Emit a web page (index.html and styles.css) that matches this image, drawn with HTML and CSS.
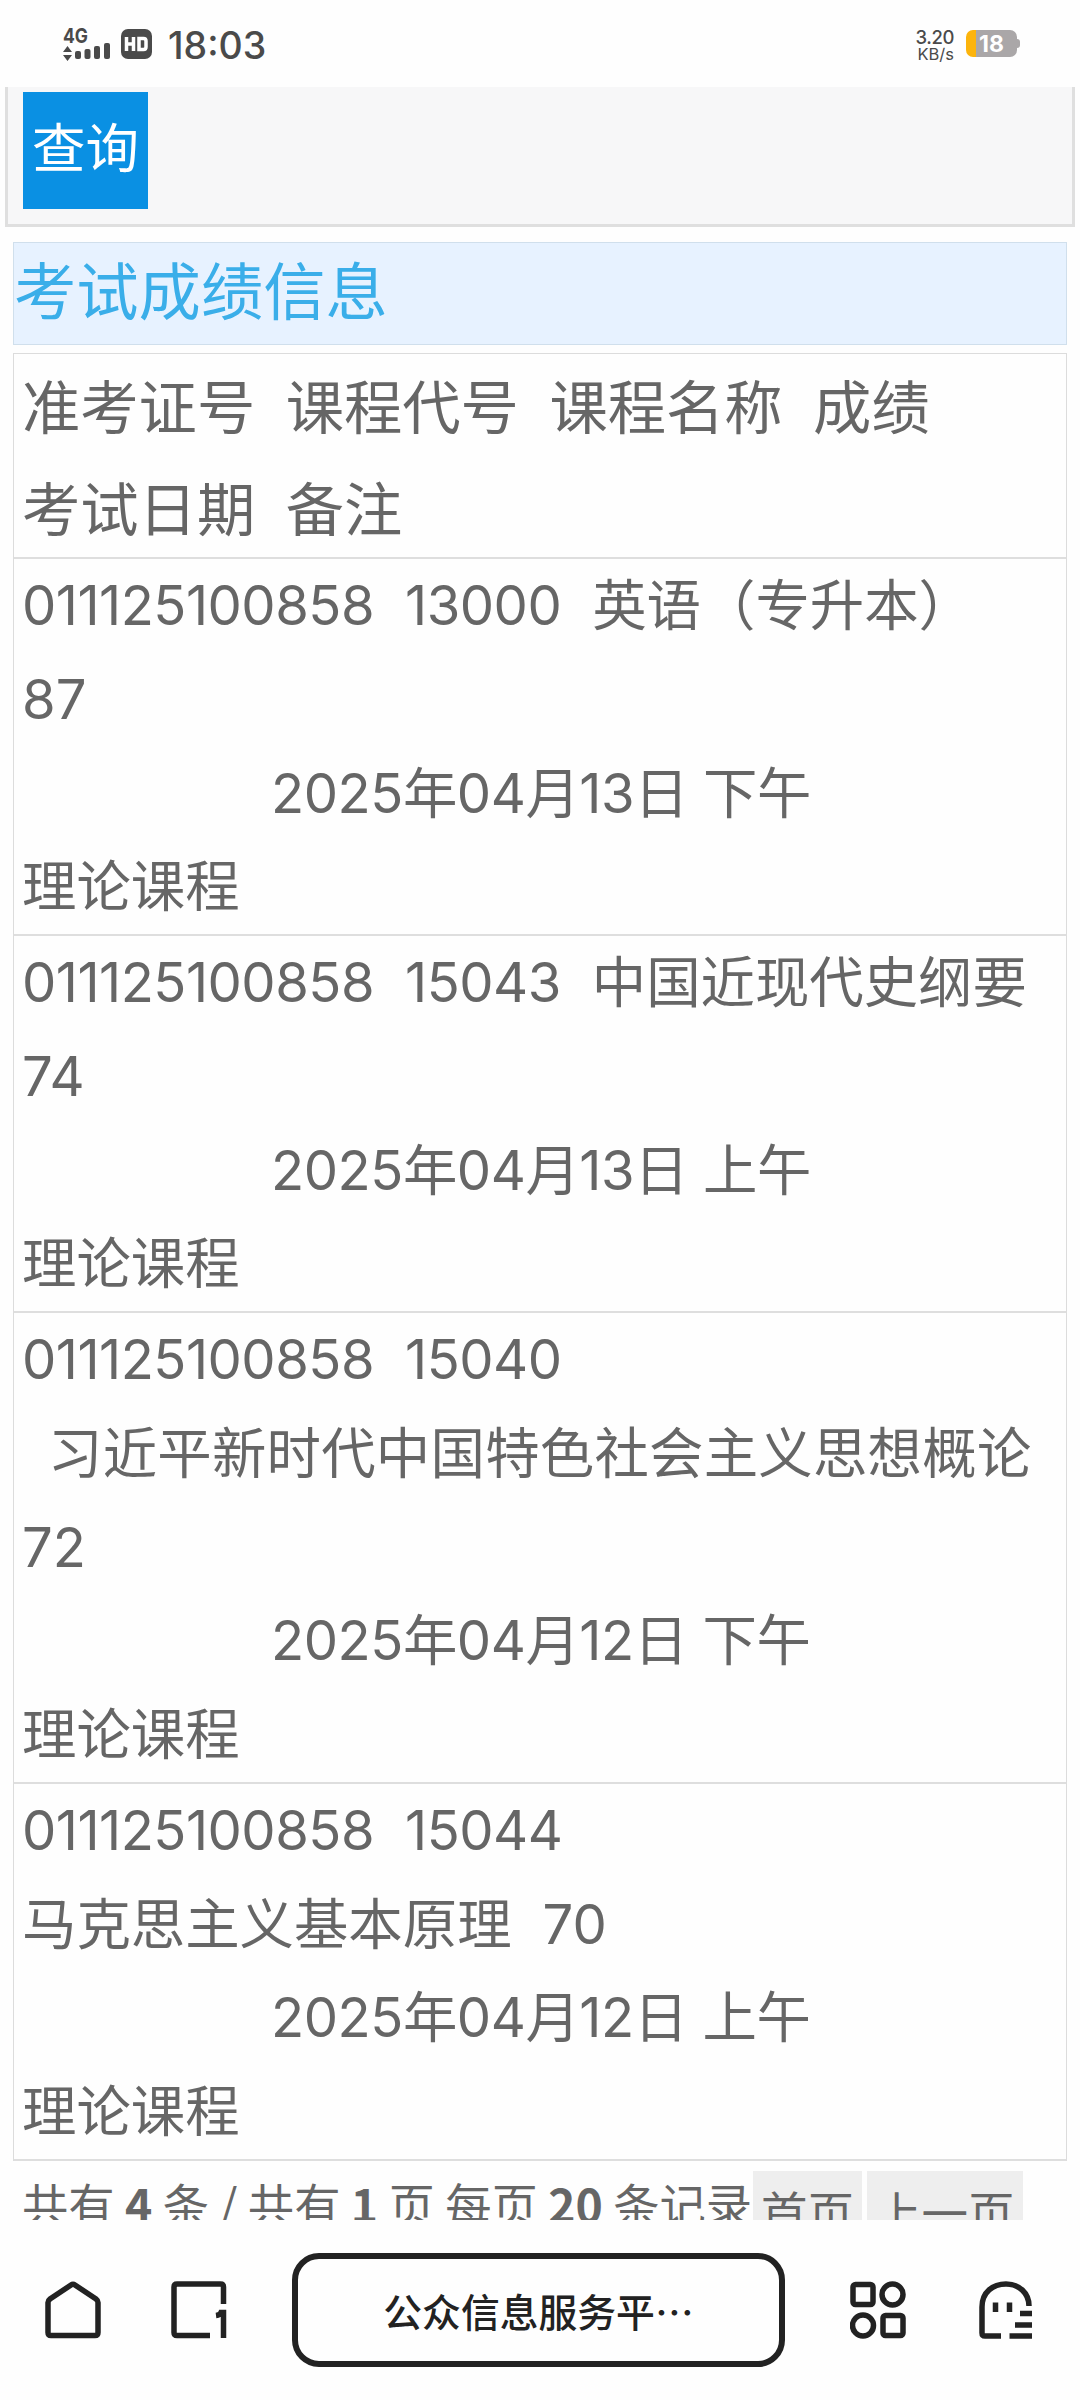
FILE: index.html
```
<!DOCTYPE html>
<html lang="zh-CN">
<head>
    <meta charset="UTF-8">
    <meta name="viewport" content="width=device-width, initial-scale=1.0">
    <title>公众信息服务平台</title>
    <link rel="stylesheet" href="styles.css">
</head>
<body>
    <div class="status-bar">
        <svg class="signal" width="48" height="34" viewBox="0 0 48 34">
            <text class="net" x="0" y="16" textLength="25" lengthAdjust="spacingAndGlyphs">4G</text>
            <path d="M0 25l4.500-6 4.500 6zM0 28h9l-4.500 6z"/>
            <rect x="12" y="24" width="6" height="8" rx="2"/>
            <rect x="21.500" y="22" width="6" height="10" rx="2"/>
            <rect x="31" y="19" width="6" height="13" rx="2"/>
            <rect x="41" y="16" width="6" height="16" rx="2"/>
        </svg>
        <svg class="hd" width="31" height="30" viewBox="0 0 31 30">
            <rect width="31" height="30" rx="7"/>
            <path d="M5.500 8v14M12.500 8v14M5.500 15h7M18 9.500h4.500q2.500 0 2.500 2.500v6q0 2.500-2.500 2.500H18z"/>
        </svg>
        <span class="time">18:03</span>
        <div class="speed">
            <span class="speed-num">3.20</span>
            <span class="speed-unit">KB/s</span>
        </div>
        <div class="battery"><span>18</span></div>
    </div>

    <div class="page">
        <div class="search-panel">
            <button class="search-btn">查询</button>
        </div>
        <h1 class="title">考试成绩信息</h1>
        <div class="scores">
            <div class="row head">
                <p class="line"><span>准考证号</span><span>课程代号</span><span>课程名称</span><span>成绩</span></p>
                <p class="line"><span>考试日期</span><span>备注</span></p>
            </div>
            <div class="row">
                <p class="line"><span class="num">011125100858</span><span class="num">13000</span><span>英语（专升本）</span></p>
                <p class="line">87</p>
                <p class="line date">2025年04月13日 下午</p>
                <p class="line">理论课程</p>
            </div>
            <div class="row">
                <p class="line"><span class="num">011125100858</span><span class="num">15043</span><span>中国近现代史纲要</span></p>
                <p class="line">74</p>
                <p class="line date">2025年04月13日 上午</p>
                <p class="line">理论课程</p>
            </div>
            <div class="row">
                <p class="line"><span class="num">011125100858</span><span class="num">15040</span></p>
                <p class="line indent">习近平新时代中国特色社会主义思想概论</p>
                <p class="line">72</p>
                <p class="line date">2025年04月12日 下午</p>
                <p class="line">理论课程</p>
            </div>
            <div class="row">
                <p class="line"><span class="num">011125100858</span><span class="num">15044</span></p>
                <p class="line"><span>马克思主义基本原理</span><span>70</span></p>
                <p class="line date">2025年04月12日 上午</p>
                <p class="line">理论课程</p>
            </div>
        </div>
        <div class="pager">
            <span class="total">共有 <b>4</b> 条 / 共有 <b>1</b> 页 每页 <b>20</b> 条记录</span>
            <a class="page-btn">首页</a>
            <a class="page-btn">上一页</a>
        </div>
    </div>

    <div class="nav">
        <svg class="home" width="56" height="58" viewBox="0 0 56 58">
            <path d="M3 21.500Q3 19.500 5 18L26 4Q28 2.500 30 4L51 18Q53 19.500 53 21.500V51.500Q53 54.500 50 54.500H6Q3 54.500 3 51.500z"/>
        </svg>
        <svg class="tabs" width="56" height="58" viewBox="0 0 56 58">
            <path d="M39 54.500H6Q3 54.500 3 51.500V6Q3 3 6 3H49.500Q52.500 3 52.500 6V23M45 34.500Q49 34 50 31.500H52.500V57"/>
        </svg>
        <div class="address">公众信息服务平<span>⋯</span></div>
        <svg class="apps" width="56" height="58" viewBox="0 0 56 58">
            <rect x="3" y="3.500" width="20" height="20" rx="2.500"/>
            <circle cx="42.500" cy="13.500" r="10.500"/>
            <circle cx="13" cy="44.500" r="10.500"/>
            <rect x="33" y="34.500" width="20" height="20" rx="2.500"/>
        </svg>
        <svg class="menu" width="53" height="58" viewBox="0 0 53 58">
            <path d="M22 55H6Q3 55 3 52V26C3 11 14 3 27 3S50 12 50 25M16.500 21.500V31M30.500 21.500V31M41 32.500H53M36 44H53M30.500 55H53"/>
        </svg>
    </div>
</body>
</html>
```
FILE: styles.css
```
* {
    box-sizing: border-box;
}
body {
    margin: 0;
    width: 1080px;
    height: 2400px;
    overflow: hidden;
    background-color: #fefefe;
    color: #666;
    font-family: Inter, "Noto Sans CJK SC", sans-serif;
}
p, h1 {
    margin: 0;
    font-weight: 400;
}

/* status bar */
.status-bar {
    display: flex;
    align-items: center;
    height: 87px;
    padding: 0 60px 0 63px;
    color: #4a4a4a;
}
.signal {
    fill: #4a4a4a;
    margin-right: 10px;
    overflow: visible;
}
.net {
    font-size: 20px;
    font-weight: 700;
}
.hd rect {
    fill: #4a4a4a;
}
.hd path {
    fill: none;
    stroke: #fff;
    stroke-width: 3.5;
}
.time {
    margin-left: 16px;
    padding-top: 3px;
    font-size: 37.5px;
    font-weight: 500;
}
.speed {
    display: flex;
    flex-direction: column;
    margin-left: auto;
    margin-right: 12px;
    padding-top: 3px;
    text-align: right;
}
.speed-num {
    font-size: 18.5px;
    line-height: 18px;
    letter-spacing: -0.4px;
    font-weight: 500;
}
.speed-unit {
    font-size: 16.5px;
    line-height: 16px;
}
.battery {
    position: relative;
    width: 51px;
    height: 27px;
    margin-right: 3px;
    border-radius: 7px;
    background: linear-gradient(to right, #fcb40c 10px, #aaa7a8 10px);
    color: #fff;
    font-size: 23px;
    font-weight: 700;
    line-height: 28px;
    padding-left: 13px;
}
.battery::after {
    content: "";
    position: absolute;
    right: -3px;
    top: 9px;
    width: 4px;
    height: 9px;
    border-radius: 0 3px 3px 0;
    background-color: #aaa7a8;
}

/* page */
.page {
    height: 2133px;
    overflow: hidden;
}
.search-panel {
    height: 140px;
    margin: 0 5px;
    padding: 5px 15px;
    background-color: #f7f7f8;
    border: 3px solid #dfdfdf;
    border-top: none;
}
.search-btn {
    display: block;
    width: 125px;
    height: 117px;
    padding: 0 0 3px;
    border: none;
    background-color: #0a90e3;
    color: #fff;
    font-family: inherit;
    font-size: 53.5px;
    line-height: 114px;
}
.title {
    height: 103px;
    margin: 15px 13px 8px;
    background-color: #e7f2ff;
    border: 1px solid #d0dfec;
    color: #3aaee9;
    font-size: 62.3px;
    line-height: 100px;
}
.scores {
    margin: 0 13px;
    border: 1px solid #dcdcdc;
    border-bottom: none;
}
.row {
    padding-left: 8px;
    border-bottom: 2px solid #dedede;
    font-size: 54.4px;
}
.line {
    display: flex;
    gap: 31px;
    height: 93.75px;
    line-height: 93.75px;
    white-space: pre;
}
.head .line {
    gap: 30.5px;
    height: 101.5px;
    font-size: 58.3px;
    line-height: 108px;
}
.num {
    letter-spacing: -0.5px;
}
.date {
    padding-left: 249px;
    letter-spacing: -0.45px;
}
.indent {
    padding-left: 26px;
    letter-spacing: 0.25px;
}
.pager {
    display: flex;
    padding: 10px 0 0 22px;
    font-family: "Noto Sans CJK SC", sans-serif;
    font-size: 46.5px;
}
.total {
    width: 731px;
    font-size: 46.3px;
    line-height: 63px;
    white-space: nowrap;
}
.page-btn {
    height: 90px;
    margin-right: 5px;
    padding: 0 8px;
    background-color: #eee;
    line-height: 80px;
}

/* browser toolbar */
.nav {
    display: flex;
    align-items: center;
    height: 180px;
    padding: 0 48px 0 45px;
}
.nav svg {
    fill: none;
    stroke: #222;
    stroke-width: 5.5;
}
.tabs {
    margin-left: 70px;
}
.address {
    width: 493px;
    height: 114px;
    margin-left: 65px;
    border: 6px solid #222;
    border-radius: 27px;
    color: #222;
    font-size: 38.8px;
    font-weight: 500;
    line-height: 102px;
    text-align: center;
}
.address span {
    font-family: "Noto Sans CJK SC", sans-serif;
}
.apps {
    margin-left: 65px;
}
.menu {
    margin-left: 73px;
}
```
